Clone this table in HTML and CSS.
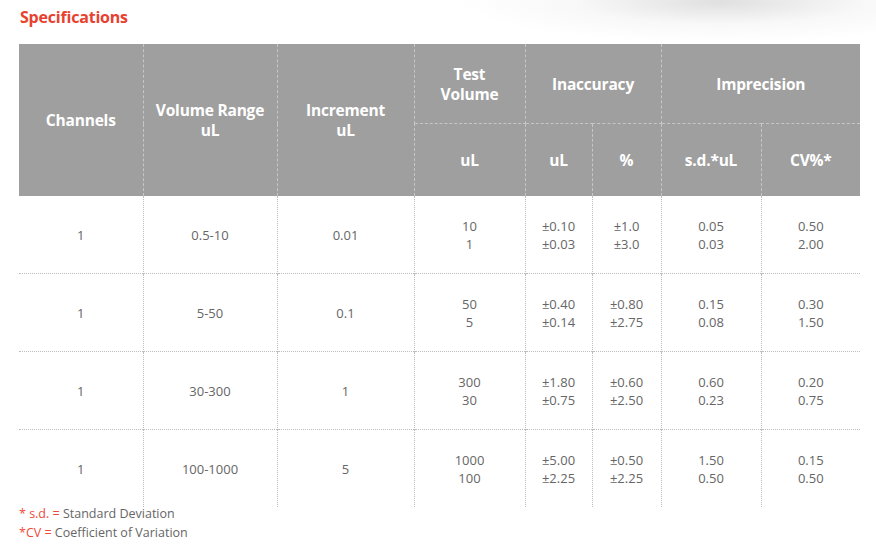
FILE: index.html
```html
<!DOCTYPE html>
<html lang="en">
<head>
<meta charset="utf-8">
<title>Specifications</title>
<link rel="stylesheet" href="styles.css">
</head>
<body>
<div class="page">
  <h2 class="title">Specifications</h2>
  <table class="spec">
    <colgroup>
      <col class="c1"><col class="c2"><col class="c3"><col class="c4">
      <col class="c5"><col class="c6"><col class="c7"><col class="c8">
    </colgroup>
    <thead>
      <tr class="h1">
        <th rowspan="2">Channels</th>
        <th rowspan="2">Volume Range<br>uL</th>
        <th rowspan="2">Increment<br>uL</th>
        <th>Test<br>Volume</th>
        <th colspan="2">Inaccuracy</th>
        <th colspan="2">Imprecision</th>
      </tr>
      <tr class="h2">
        <th>uL</th>
        <th>uL</th>
        <th>%</th>
        <th>s.d.*uL</th>
        <th>CV%*</th>
      </tr>
    </thead>
    <tbody>
      <tr>
        <td>1</td><td>0.5-10</td><td>0.01</td>
        <td>10<br>1</td><td>±0.10<br>±0.03</td><td>±1.0<br>±3.0</td>
        <td>0.05<br>0.03</td><td>0.50<br>2.00</td>
      </tr>
      <tr>
        <td>1</td><td>5-50</td><td>0.1</td>
        <td>50<br>5</td><td>±0.40<br>±0.14</td><td>±0.80<br>±2.75</td>
        <td>0.15<br>0.08</td><td>0.30<br>1.50</td>
      </tr>
      <tr>
        <td>1</td><td>30-300</td><td>1</td>
        <td>300<br>30</td><td>±1.80<br>±0.75</td><td>±0.60<br>±2.50</td>
        <td>0.60<br>0.23</td><td>0.20<br>0.75</td>
      </tr>
      <tr>
        <td>1</td><td>100-1000</td><td>5</td>
        <td>1000<br>100</td><td>±5.00<br>±2.25</td><td>±0.50<br>±2.25</td>
        <td>1.50<br>0.50</td><td>0.15<br>0.50</td>
      </tr>
    </tbody>
  </table>
  <div class="notes">
    <p><span class="red">* s.d. =</span> Standard Deviation</p>
    <p><span class="red">*CV =</span> Coefficient of Variation</p>
  </div>
</div>
</body>
</html>
```

FILE: styles.css
```css
html, body {
  margin: 0;
  padding: 0;
}
body {
  width: 876px;
  height: 552px;
  overflow: hidden;
  font-family: "Open Sans", "Liberation Sans", sans-serif;
  background:
    radial-gradient(ellipse 260px 40px at 720px 2px, rgba(210,210,210,0.7), rgba(235,235,235,0.35) 55%, rgba(255,255,255,0) 100%),
    #ffffff;
}
.page {
  padding: 0 0 0 19px;
}
.title {
  margin: 0;
  padding: 6px 0 0 1px;
  height: 44px;
  box-sizing: border-box;
  font-size: 16px;
  line-height: 22px;
  font-weight: 700;
  color: #e8412f;
  letter-spacing: -0.2px;
}
.spec {
  width: 841px;
  border-collapse: collapse;
  table-layout: fixed;
}
.c1 { width: 124px; }
.c2 { width: 134px; }
.c3 { width: 137px; }
.c4 { width: 111px; }
.c5 { width: 67px; }
.c6 { width: 69px; }
.c7 { width: 100px; }
.c8 { width: 99px; }

.spec th {
  background: #9f9f9f;
  color: #ffffff;
  font-weight: 700;
  font-size: 15.5px;
  line-height: 20px;
  padding: 0;
  text-align: center;
  vertical-align: middle;
  border: 1px dashed #c6c6c6;
  letter-spacing: -0.2px;
}
.spec thead tr.h1 th { height: 79px; border-top: none; }
.spec thead tr.h2 th { height: 72px; border-bottom: none; }
.spec thead th:first-child { border-left: none; }
.spec thead tr.h1 th:last-child,
.spec thead tr.h2 th:last-child { border-right: none; }
.spec thead tr.h1 th[rowspan] { border-bottom: none; }

.spec td {
  height: 77px;
  padding: 0;
  text-align: center;
  vertical-align: middle;
  font-size: 13px;
  line-height: 18px;
  color: #666666;
  border-left: 1px dotted #bdbdbd;
  border-top: 1px dotted #bdbdbd;
}
.spec tbody tr:first-child td { border-top: none; }
.spec tbody td:first-child { border-left: none; }

.notes {
  margin-top: -3px;
}
.notes p {
  margin: 0;
  font-size: 12.5px;
  line-height: 19px;
  color: #666666;
}
.red {
  color: #f0493a;
}
```
